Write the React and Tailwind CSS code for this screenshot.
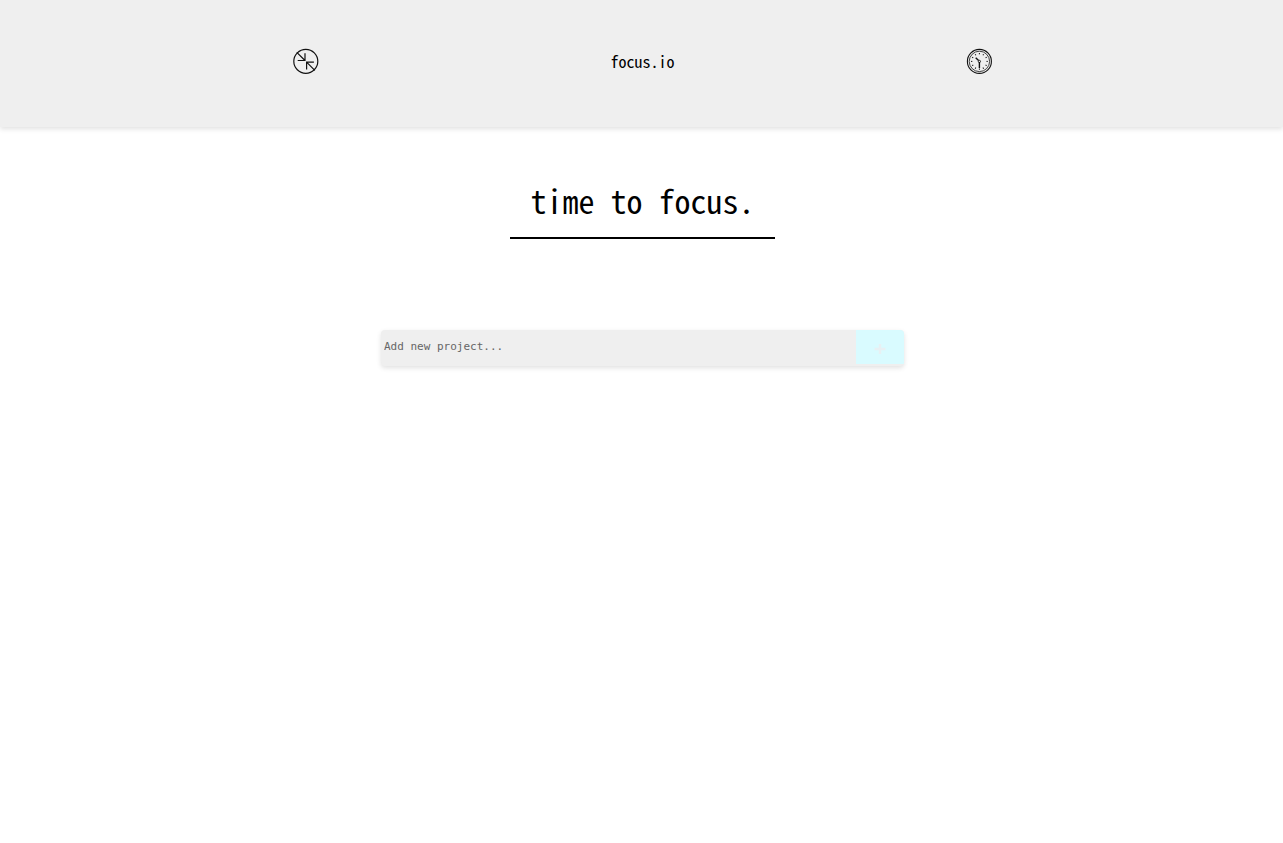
const TICKS = [0, 30, 60, 90, 120, 150, 180, 210, 240, 270, 300, 330];

function FocusIcon() {
  return (
    <svg className="size-[26px]" viewBox="0 0 26 26" fill="none" stroke="#111" strokeWidth="1.2" aria-hidden="true">
      <circle cx="12.8" cy="13.3" r="12" />
      <path d="M3.8 4.3 12 12.5M12 5.2V12.5H4.7" />
      <path d="M21.8 22.3 13.6 14.1M13.6 21.4V14.1h7.3" />
    </svg>
  );
}

function ClockIcon() {
  return (
    <svg className="size-[26px]" viewBox="0 0 26 26" fill="none" stroke="#111" aria-hidden="true">
      <circle cx="13.4" cy="13.4" r="12" strokeWidth="1.1" />
      <circle cx="13.4" cy="13.4" r="10.2" strokeWidth="0.8" />
      {TICKS.map((angle) => (
        <path key={angle} d="M13.4 5v1.3" strokeWidth="1" transform={`rotate(${angle} 13.4 13.4)`} />
      ))}
      <path d="m9.7 9.7 2.9 2.9M13.4 14v6" strokeWidth="1.4" />
      <circle cx="13.4" cy="13.4" r="1.1" strokeWidth="0.9" />
    </svg>
  );
}

export default function App() {
  return (
    <div className="min-h-screen bg-white font-['Noto_Sans_Mono_CJK_SC','Liberation_Mono',monospace] text-black">
      <header className="flex items-center justify-evenly bg-[#efefef] pt-12 pb-[53px] pl-0.5 shadow-[0_2px_5px_rgba(0,0,0,0.12)]">
        <a href="#focus" aria-label="Focus"><FocusIcon /></a>
        <a href="#home" className="text-base">focus.io</a>
        <a href="#timer" aria-label="Timer"><ClockIcon /></a>
      </header>
      <main className="flex flex-col items-center pt-[53px] pr-4 pl-[18px]">
        <h1 className="border-b-2 border-black px-5 pb-[17px] text-[32px] leading-10 font-light">time to focus.</h1>
        <form
          className="mt-[91px] flex w-full max-w-[523px] overflow-hidden rounded-[4px] bg-[#efefef] shadow-[0_2px_5px_rgba(0,0,0,0.12)]"
          onSubmit={(event) => event.preventDefault()}
        >
          <input
            type="text"
            aria-label="New project"
            placeholder="Add new project..."
            className="h-9 min-w-0 flex-1 px-[3px] pb-1 font-['DejaVu_Sans_Mono',monospace] text-[11px] outline-none placeholder:text-[#666]"
          />
          <button
            type="submit"
            aria-label="Add project"
            className="flex h-[34px] w-12 items-center justify-center bg-[#d9fbff]"
          >
            <svg className="mt-1 size-4" viewBox="0 0 16 16" fill="none" stroke="#e8f0f3" strokeWidth="2.5" aria-hidden="true">
              <path d="M8 3v10M2.5 8h11" />
            </svg>
          </button>
        </form>
      </main>
    </div>
  );
}
